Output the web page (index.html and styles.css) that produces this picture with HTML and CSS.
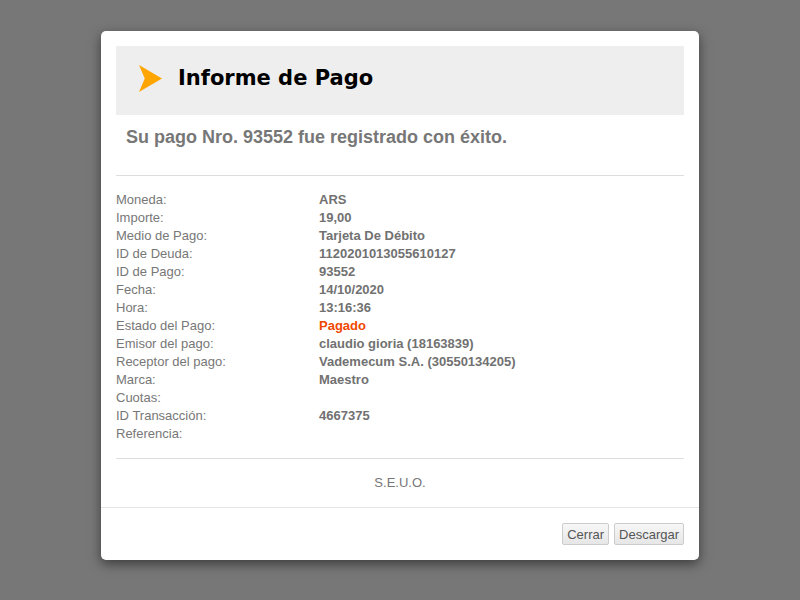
FILE: index.html
```html
<!DOCTYPE html>
<html>
<head>
<meta charset="utf-8">
<link rel="stylesheet" href="styles.css">
</head>
<body>
<div class="modal">
  <div class="body">
    <div class="header">
      <svg class="arrow" width="24" height="28" viewBox="0 0 24 28"><polygon points="0,0 24,14 0,28 6,14" fill="#ffa500"/></svg>
      <h1 class="title">Informe de Pago</h1>
    </div>
    <p class="subtitle">Su pago Nro. 93552 fue registrado con éxito.</p>
    <hr class="sep">
    <div class="details">
      <span class="label">Moneda:</span><span class="value">ARS</span>
      <span class="label">Importe:</span><span class="value">19,00</span>
      <span class="label">Medio de Pago:</span><span class="value">Tarjeta De Débito</span>
      <span class="label">ID de Deuda:</span><span class="value">1120201013055610127</span>
      <span class="label">ID de Pago:</span><span class="value">93552</span>
      <span class="label">Fecha:</span><span class="value">14/10/2020</span>
      <span class="label">Hora:</span><span class="value">13:16:36</span>
      <span class="label">Estado del Pago:</span><span class="value status">Pagado</span>
      <span class="label">Emisor del pago:</span><span class="value">claudio gioria (18163839)</span>
      <span class="label">Receptor del pago:</span><span class="value">Vademecum S.A. (30550134205)</span>
      <span class="label">Marca:</span><span class="value">Maestro</span>
      <span class="label">Cuotas:</span><span class="value"></span>
      <span class="label">ID Transacción:</span><span class="value">4667375</span>
      <span class="label">Referencia:</span><span class="value"></span>
    </div>
    <hr class="sep sep2">
    <p class="seuo">S.E.U.O.</p>
  </div>
  <div class="footer">
    <button class="btn">Cerrar</button>
    <button class="btn">Descargar</button>
  </div>
</div>
</body>
</html>
```
FILE: styles.css
```css
html, body {
  margin: 0;
  padding: 0;
  height: 100%;
}
body {
  background: #777777;
  font-family: "Liberation Sans", Arial, sans-serif;
  display: flex;
  justify-content: center;
  align-items: flex-start;
}
.modal {
  margin-top: 31px;
  width: 598px;
  background: #fff;
  border-radius: 5px;
  box-shadow: 0 4px 12px rgba(0,0,0,0.5);
}
.body {
  padding: 15px 15px 0 15px;
}
.header {
  height: 69px;
  box-sizing: border-box;
  background: #eeeeee;
  display: flex;
  align-items: center;
  padding-left: 23px;
  padding-bottom: 5px;
}
.arrow {
  display: block;
  width: 23px;
  height: 27px;
}
.title {
  margin: 0 0 0 16px;
  font-family: "DejaVu Sans", Verdana, sans-serif;
  font-weight: bold;
  font-size: 21px;
  line-height: 24px;
  color: #000;
}
.subtitle {
  margin: 0;
  padding: 12px 10px 0 10px;
  height: 48px;
  font-size: 18px;
  font-weight: bold;
  color: #777;
  line-height: 20px;
}
.sep {
  margin: 0;
  border: 0;
  border-top: 1px solid #dddddd;
}
.details {
  display: grid;
  grid-template-columns: 203px 1fr;
  grid-auto-rows: 18px;
  padding: 15px 0 15px 0;
  font-size: 13px;
  line-height: 18px;
}
.label {
  color: #777;
}
.value {
  color: #717171;
  font-weight: bold;
}
.status {
  color: #f04800;
}
.seuo {
  margin: 0;
  text-align: center;
  font-size: 13px;
  color: #777;
  line-height: 18px;
  padding: 15px 0 15px 0;
}
.footer {
  border-top: 1px solid #e5e5e5;
  padding: 15px;
  display: flex;
  justify-content: flex-end;
  gap: 5px;
}
.btn {
  font-family: "Liberation Sans", Arial, sans-serif;
  font-size: 13px;
  color: #555;
  height: 22px;
  padding: 0 4px;
  background: linear-gradient(#f7f7f7, #e6e6e6);
  border: 1px solid #cccccc;
  border-radius: 2px;
}
```
